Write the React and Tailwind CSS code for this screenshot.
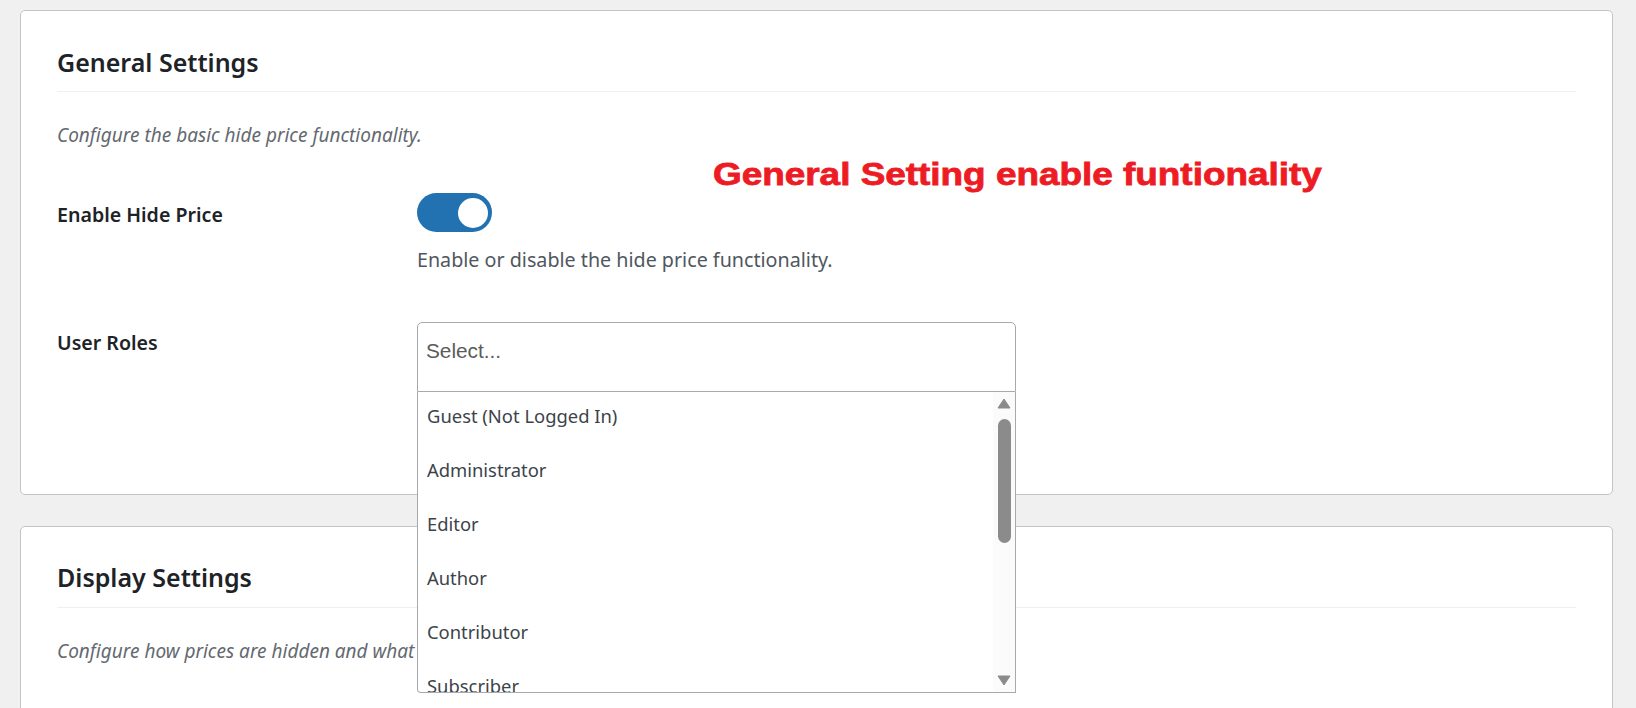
import React from "react";

const roles = [
  "Guest (Not Logged In)",
  "Administrator",
  "Editor",
  "Author",
  "Contributor",
  "Subscriber",
  "Customer",
  "Shop Manager",
];

function Toggle() {
  return (
    <div className="w-[75px] h-[39px] rounded-full bg-[#2271b1] flex items-center justify-end pr-[4px]">
      <div className="w-[30px] h-[30px] rounded-full bg-white" />
    </div>
  );
}

function RoleSelect() {
  return (
    <div className="relative w-[599px]">
      <div className="h-[70px] border border-[#a7aaad] rounded-t-[5px] bg-white px-[8px] pt-[16px]">
        <span className="block text-[20.8px] leading-[24px] text-[#5b5b5b] font-['Liberation_Sans',Arial,sans-serif]">
          Select...
        </span>
      </div>
      <div className="absolute left-0 top-full w-[599px] h-[301px] border-x border-b border-[#a7aaad] rounded-bl-[4px] bg-white overflow-hidden z-10">
        <div className="-mt-[3px] pr-[22px]">
          {roles.map((r) => (
            <div
              key={r}
              className="h-[54px] flex items-center pl-[9px] text-[18.4px] text-[#3c434a]"
            >
              {r}
            </div>
          ))}
        </div>
        <div className="absolute right-0 top-0 bottom-0 w-[22px] bg-[#fbfbfb]">
          <svg
            className="absolute left-[4px] top-[6px]"
            width="14"
            height="11"
            viewBox="0 0 14 11"
          >
            <path d="M7 1 L13 10 L1 10 Z" fill="#8b8b8b" stroke="#8b8b8b" strokeWidth="1" strokeLinejoin="round" />
          </svg>
          <div className="absolute left-[5px] top-[27px] w-[13px] h-[124px] rounded-full bg-[#8b8b8b]" />
          <svg
            className="absolute left-[4px] top-[283px]"
            width="14"
            height="11"
            viewBox="0 0 14 11"
          >
            <path d="M1 1 L13 1 L7 10 Z" fill="#8b8b8b" stroke="#8b8b8b" strokeWidth="1" strokeLinejoin="round" />
          </svg>
        </div>
      </div>
    </div>
  );
}

export default function App() {
  return (
    <div className="h-[708px] overflow-hidden bg-[#f0f0f1] pt-[10px] pl-[20px] pr-[23px] font-['Noto_Sans',sans-serif]">
      {/* General Settings card */}
      <div className="relative h-[485px] border border-[#c3c4c7] rounded-[5px] bg-white px-[36px]">
        <div className="pt-[33px] pb-[11px] border-b border-[#f0f0f1]">
          <h2 className="text-[25px] leading-[36px] font-semibold text-[#1d2327]">
            General Settings
          </h2>
        </div>
        <p className="mt-[29px] text-[19px] leading-[28px] italic text-[#646970]">
          Configure the basic hide price functionality.
        </p>

        <div className="mt-[44px] flex">
          <div className="w-[360px] shrink-0 pt-[8px] text-[19.6px] leading-[28px] font-semibold text-[#1d2327]">
            Enable Hide Price
          </div>
          <div>
            <Toggle />
            <p className="mt-[14px] text-[19.7px] leading-[28px] text-[#50575e]">
              Enable or disable the hide price functionality.
            </p>
          </div>
        </div>

        <div className="mt-[48px] flex">
          <div className="w-[360px] shrink-0 pt-[7px] text-[19.6px] leading-[28px] font-semibold text-[#1d2327]">
            User Roles
          </div>
          <RoleSelect />
        </div>

        <div className="absolute left-[692px] top-[148px] origin-left scale-x-[1.19] whitespace-nowrap text-[31px] leading-[31px] font-bold text-[#ed1c24] [-webkit-text-stroke:0.8px_#ed1c24] font-['Liberation_Sans',Arial,sans-serif]">
          General Setting enable funtionality
        </div>
      </div>

      {/* Display Settings card */}
      <div className="mt-[31px] h-[400px] border border-[#c3c4c7] rounded-[5px] bg-white px-[36px]">
        <div className="pt-[32px] pb-[12px] border-b border-[#f0f0f1]">
          <h2 className="text-[25px] leading-[36px] font-semibold text-[#1d2327]">
            Display Settings
          </h2>
        </div>
        <p className="mt-[29px] text-[19px] leading-[28px] italic text-[#646970]">
          Configure how prices are hidden and what message is shown to visitors.
        </p>
      </div>
    </div>
  );
}
